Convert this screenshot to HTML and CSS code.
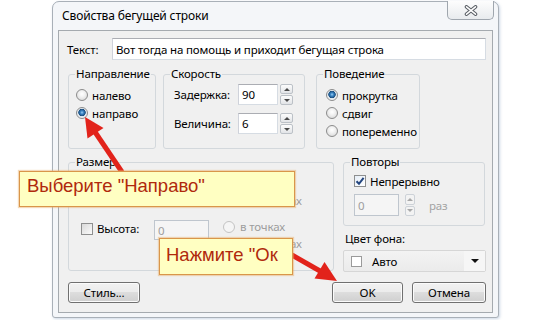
FILE: index.html
```html
<!DOCTYPE html>
<html lang="ru">
<head>
<meta charset="utf-8">
<link rel="stylesheet" href="styles.css">
</head>
<body>
<div class="window">
  <div class="titlebar">
    <span class="title">Свойства бегущей строки</span>
    <div class="close">
      <svg width="14" height="11" viewBox="0 0 14 11"><path d="M2.5 1.8 L11.5 9.2 M11.5 1.8 L2.5 9.2" stroke="#5b6067" stroke-width="3.6" stroke-linecap="round"/><path d="M2.5 1.8 L11.5 9.2 M11.5 1.8 L2.5 9.2" stroke="#ffffff" stroke-width="1.5" stroke-linecap="round"/></svg>
    </div>
  </div>
  <div class="client">
    <div class="text-row">
      <span class="text-label">Текст:</span>
      <div class="field text-field">Вот тогда на помощь и приходит бегущая строка</div>
    </div>
    <div class="groups">
      <fieldset class="group g-dir">
        <legend>Направление</legend>
        <div class="body">
          <div class="opt"><span class="radio"></span>налево</div>
          <div class="opt"><span class="radio on"></span>направо</div>
        </div>
      </fieldset>
      <fieldset class="group g-speed">
        <legend>Скорость</legend>
        <div class="body">
          <div class="spin-row"><span class="sp-label">Задержка:</span><div class="field num">90</div><div class="spin"><span class="up"></span><span class="dn"></span></div></div>
          <div class="spin-row"><span class="sp-label">Величина:</span><div class="field num">6</div><div class="spin"><span class="up"></span><span class="dn"></span></div></div>
        </div>
      </fieldset>
      <fieldset class="group g-beh">
        <legend>Поведение</legend>
        <div class="body">
          <div class="opt"><span class="radio on"></span>прокрутка</div>
          <div class="opt"><span class="radio"></span>сдвиг</div>
          <div class="opt"><span class="radio"></span>попеременно</div>
        </div>
      </fieldset>
    </div>
    <div class="row2">
      <fieldset class="group g-size">
        <legend>Размер</legend>
        <div class="body">
          <div class="size-row">
            <div class="cb-label"><span class="check"></span>Ширина:</div>
            <div class="field dis-field">0</div>
            <div class="radios">
              <div class="opt"><span class="radio dis"></span>в точках</div>
              <div class="opt"><span class="radio dis"></span>в символах</div>
            </div>
          </div>
          <div class="size-row">
            <div class="cb-label"><span class="check"></span>Высота:</div>
            <div class="field dis-field">0</div>
            <div class="radios">
              <div class="opt"><span class="radio dis"></span>в точках</div>
              <div class="opt"><span class="radio dis"></span>в символах</div>
            </div>
          </div>
        </div>
      </fieldset>
      <div class="right-col">
        <fieldset class="group g-rep">
          <legend>Повторы</legend>
          <div class="body">
            <div class="opt"><span class="check on"><svg width="10" height="10" viewBox="0 0 10 10"><path d="M1.5 5.2 L4 7.8 L8.6 1.8" fill="none" stroke="#23457e" stroke-width="2"/></svg></span>Непрерывно</div>
            <div class="rep-row"><div class="field dis-field">0</div><div class="spin dis"><span class="up"></span><span class="dn"></span></div><span class="muted">раз</span></div>
          </div>
        </fieldset>
        <div class="bg-label">Цвет фона:</div>
        <div class="combo"><span class="swatch"></span><span class="combo-text">Авто</span><span class="combo-btn"></span></div>
      </div>
    </div>
    <div class="buttons">
      <button class="btn b-style">Стиль...</button>
      <button class="btn b-ok">OK</button>
      <button class="btn b-cancel">Отмена</button>
    </div>
  </div>
</div>
<svg class="arrows" width="550" height="320" viewBox="0 0 550 320">
  <line x1="122" y1="172" x2="95" y2="132" stroke="#e2231b" stroke-width="5"/>
  <polygon points="85,117 87.5,138.5 103.5,128" fill="#e2231b"/>
  <line x1="292" y1="255" x2="320" y2="271" stroke="#e2231b" stroke-width="5"/>
  <polygon points="337,281 314.5,278.5 324.5,262" fill="#e2231b"/>
</svg>
<div class="callout c1">Выберите "Направо"</div>
<div class="callout c2">Нажмите "Ок</div>
</body>
</html>
```
FILE: styles.css
```css
* { box-sizing: border-box; }
html, body { margin: 0; padding: 0; }
body {
  width: 550px; height: 320px; overflow: hidden; position: relative;
  background: #fff; color: #000;
  font-family: "Noto Sans", "Segoe UI", sans-serif; font-size: 11.5px; line-height: 15px;
  letter-spacing: -0.15px;
}
.window {
  margin: 1px 0 0 52px; width: 447px; height: 317px;
  border: 1px solid #a9b0b8; border-radius: 7px 7px 3px 3px;
  background: #f4f6f9; padding: 0 5px 4px;
  display: flex; flex-direction: column;
  box-shadow: 1px 1px 3px rgba(110, 140, 180, 0.35);
}
.titlebar { height: 28px; flex: none; display: flex; justify-content: space-between; align-items: flex-start; }
.title { padding-left: 4px; line-height: 27px; font-size: 12px; }
.close {
  width: 47px; height: 19px; margin: -1px -1px 0 0;
  border: 1px solid #9fa6ae; border-top: none; border-radius: 0 0 5px 5px;
  background: linear-gradient(#fdfdfd, #e8ebee);
  display: flex; align-items: center; justify-content: center;
}
.client {
  flex: 1; border: 1px solid #a5aaaf; background: #f0f0f0;
  padding: 7px 6px 0 8px; display: flex; flex-direction: column;
}
.field {
  background: #fff; border: 1px solid #abadb3; border-color: #abadb3 #d6dce3 #d6dce3 #cfd2da;
  padding: 0 3px; display: flex; align-items: center; white-space: nowrap;
}
.text-row { display: flex; align-items: center; height: 22px; flex: none; }
.text-label { width: 45px; }
.text-field { flex: 1; height: 22px; }

.groups { display: flex; margin: 7px 0 0 1px; height: 82px; flex: none; }
.group {
  margin: 0; padding: 0; min-width: 0;
  border: 1px solid #d3d8dc; border-radius: 3px;
}
.group legend { margin-left: 6px; padding: 0 1px; line-height: 14px; }
.g-dir { width: 88px; }
.g-speed { width: 142px; margin-left: 7px; }
.g-beh { width: 104px; margin-left: 11px; }
.g-dir .body { padding: 5px 0 0 7px; }
.g-beh .body { padding: 5px 0 0 9px; }
.opt { display: flex; align-items: center; height: 18px; gap: 4px; white-space: nowrap; }
.radio {
  flex: none; width: 12px; height: 12px; border-radius: 50%;
  border: 1px solid #8c8c8c;
  background: radial-gradient(circle at 50% 40%, #ffffff 0, #f3f3f3 35%, #d2d2d2 100%);
}
.radio.on {
  background: radial-gradient(circle at 50% 45%, #9fd0f2 0, #3a86c6 1.6px, #1b4e7f 3.4px, #dfe6ec 4px, #fbfbfb 6px);
}
.radio.dis { border-color: #c3c3c3; background: #f5f5f5; }

.g-speed .body { padding: 3px 0 0 10px; display: flex; flex-direction: column; gap: 8px; }
.spin-row { display: flex; align-items: center; height: 21px; }
.sp-label { width: 64px; }
.num { width: 40px; height: 21px; }
.spin { display: flex; flex-direction: column; gap: 1px; margin-left: 2px; width: 13px; height: 21px; }
.spin span {
  flex: 1; border: 1px solid #bcc1c7; border-radius: 2px;
  background: linear-gradient(#fcfcfc, #e2e4e7);
  display: flex; align-items: center; justify-content: center;
}
.spin .up::after { content: ""; border-left: 3px solid transparent; border-right: 3px solid transparent; border-bottom: 3px solid #4a4a4a; }
.spin .dn::after { content: ""; border-left: 3px solid transparent; border-right: 3px solid transparent; border-top: 3px solid #4a4a4a; }
.spin.dis span { border-color: #cdd2d8; background: #f3f3f3; }
.spin.dis .up::after { border-bottom-color: #a8a8a8; }
.spin.dis .dn::after { border-top-color: #a8a8a8; }

.row2 { display: flex; margin: 6px 0 0 1px; gap: 9px; flex: none; }
.g-size { width: 266px; height: 116px; }
.g-size .body { padding: 6px 0 0 12px; display: flex; flex-direction: column; gap: 9px; }
.size-row { display: flex; align-items: flex-start; height: 34px; }
.cb-label { width: 73px; height: 17px; margin-top: 2px; display: flex; align-items: center; gap: 4px; }
.check {
  flex: none; width: 12px; height: 12px; border: 1px solid #8e8f8f;
  background: linear-gradient(135deg, #d9d9d9, #fbfbfb);
  display: flex; align-items: center; justify-content: center;
}
.check.on { background: linear-gradient(135deg, #e6eef7, #ffffff); }
.dis-field { width: 55px; height: 20px; margin-top: 2px; background: #f5f5f5; border-color: #bfc6ce; color: #9e9e9e; }
.radios { margin-left: 14px; }
.radios .opt { height: 17px; gap: 5px; color: #9d9d9d; }

.right-col { width: 143px; display: flex; flex-direction: column; }
.g-rep { height: 71px; width: 142px; }
.g-rep .body { padding: 3px 0 0 10px; }
.rep-row { display: flex; align-items: center; height: 22px; margin-top: 4px; }
.rep-row .dis-field { width: 45px; height: 22px; margin: 0; }
.rep-row .spin { margin-left: 6px; width: 10px; height: 22px; }
.muted { color: #a3a3a3; margin-left: 14px; }
.bg-label { margin-top: 5px; padding-left: 2px; }
.combo {
  margin-top: 4px; height: 22px; display: flex; align-items: center;
  border: 1px solid #d6d6d6; border-radius: 2px;
  background: linear-gradient(#f3f3f3, #ebebeb); padding-left: 7px;
}
.swatch { width: 11px; height: 11px; border: 1px solid #9a9a9a; background: #fff; flex: none; }
.combo-text { margin-left: 10px; flex: 1; }
.combo-btn {
  width: 21px; height: 20px; background: #f6f6f6;
  display: flex; align-items: center; justify-content: center;
}
.combo-btn::after { content: ""; border-left: 4px solid transparent; border-right: 4px solid transparent; border-top: 4px solid #111; }

.buttons { display: flex; margin: 10px 0 0 1px; flex: none; }
.btn {
  height: 21px; padding: 0; font: inherit; letter-spacing: inherit; color: #000;
  border: 1px solid #707070; border-radius: 3px;
  background: linear-gradient(#f2f2f2 0, #ebebeb 50%, #dddddd 50%, #cfcfcf 100%);
  box-shadow: inset 0 0 0 1px #fbfbfb;
  display: flex; align-items: center; justify-content: center;
}
.b-style { width: 72px; }
.b-ok { width: 71px; margin-left: auto; }
.b-cancel { width: 74px; margin-left: 9px; }

.arrows { position: absolute; left: 0; top: 0; pointer-events: none; }
.callout {
  position: absolute; background: #ffffc2; border: 1px solid #d9964a;
  box-shadow: 0 0 1px 1px rgba(230, 170, 100, 0.45);
  color: #b0290c; font-family: "Liberation Sans", Arial, sans-serif;
  font-size: 18.5px; line-height: 21px; letter-spacing: 0; white-space: nowrap;
}
.c1 { left: 19px; top: 171px; width: 276px; height: 36px; padding: 3px 0 0 7px; }
.c2 { left: 159px; top: 238px; width: 134px; height: 37px; padding: 5px 0 0 6px; overflow: hidden; }
```
